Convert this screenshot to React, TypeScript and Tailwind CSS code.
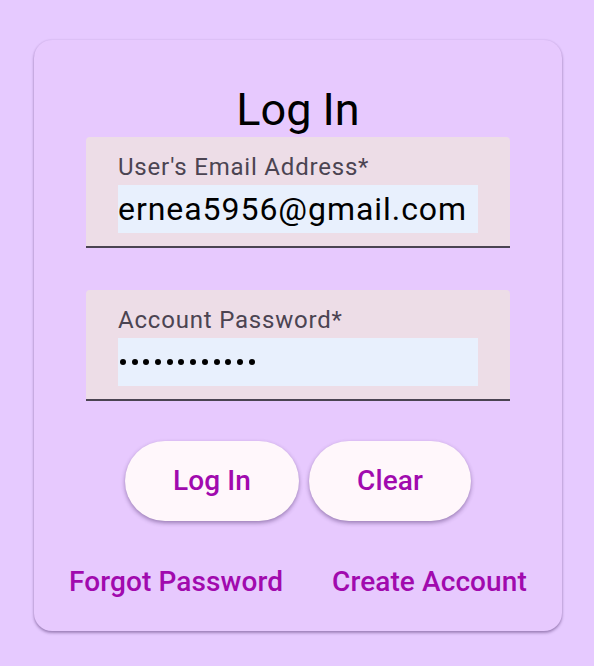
import React from "react";

function Field({ label, children }: { label: string; children: React.ReactNode }) {
  return (
    <div className="w-[424px] rounded-t-[4px] bg-[#eddde7] border-b-[2px] border-[#4b4452] px-8 pt-[14px] pb-[13px]">
      <div className="text-[24px] leading-[32px] tracking-[0.8px] text-[#4b4452]">{label}</div>
      <div className="mt-[2px] h-[48px] bg-[#e8f0fd] flex items-center">{children}</div>
    </div>
  );
}

export default function App() {
  return (
    <div
      className="min-h-screen bg-[#e6caff] pt-[40px] pl-[34px]"
      style={{ fontFamily: "Roboto, 'Noto Sans', sans-serif" }}
    >
      <div className="w-[528px] h-[591px] rounded-[18px] bg-[#e7c9fe] shadow-[0_2px_3px_rgba(60,30,90,0.4),0_0_2px_rgba(60,30,90,0.15)] flex flex-col items-center pt-[42px]">
        <h1 className="text-[45px] leading-[56px] text-black">Log In</h1>

        <div className="mt-[-1px]">
          <Field label="User's Email Address*">
            <span className="text-[32px] tracking-[0.95px] text-black">ernea5956@gmail.com</span>
          </Field>
        </div>

        <div className="mt-[42px]">
          <Field label="Account Password*">
            <div className="flex gap-[5.7px] pl-[2px]">
              {Array.from({ length: 12 }).map((_, i) => (
                <span key={i} className="w-[6px] h-[6px] rounded-full bg-black" />
              ))}
            </div>
          </Field>
        </div>

        <div className="mt-[40px] flex gap-[10px]">
          <button className="h-[80px] px-[48px] rounded-full bg-[#fff7fb] text-[#a10aae] text-[28px] tracking-[0.1px] font-medium shadow-[0_2px_4px_rgba(60,30,90,0.45)]">
            Log In
          </button>
          <button className="h-[80px] px-[48px] rounded-full bg-[#fff7fb] text-[#a10aae] text-[28px] tracking-[0.1px] font-medium shadow-[0_2px_4px_rgba(60,30,90,0.45)]">
            Clear
          </button>
        </div>

        <div className="mt-[40px] flex gap-[49px] text-[28px] tracking-[0.1px] font-medium text-[#a10aae]">
          <span>Forgot Password</span>
          <span>Create Account</span>
        </div>
      </div>
    </div>
  );
}
